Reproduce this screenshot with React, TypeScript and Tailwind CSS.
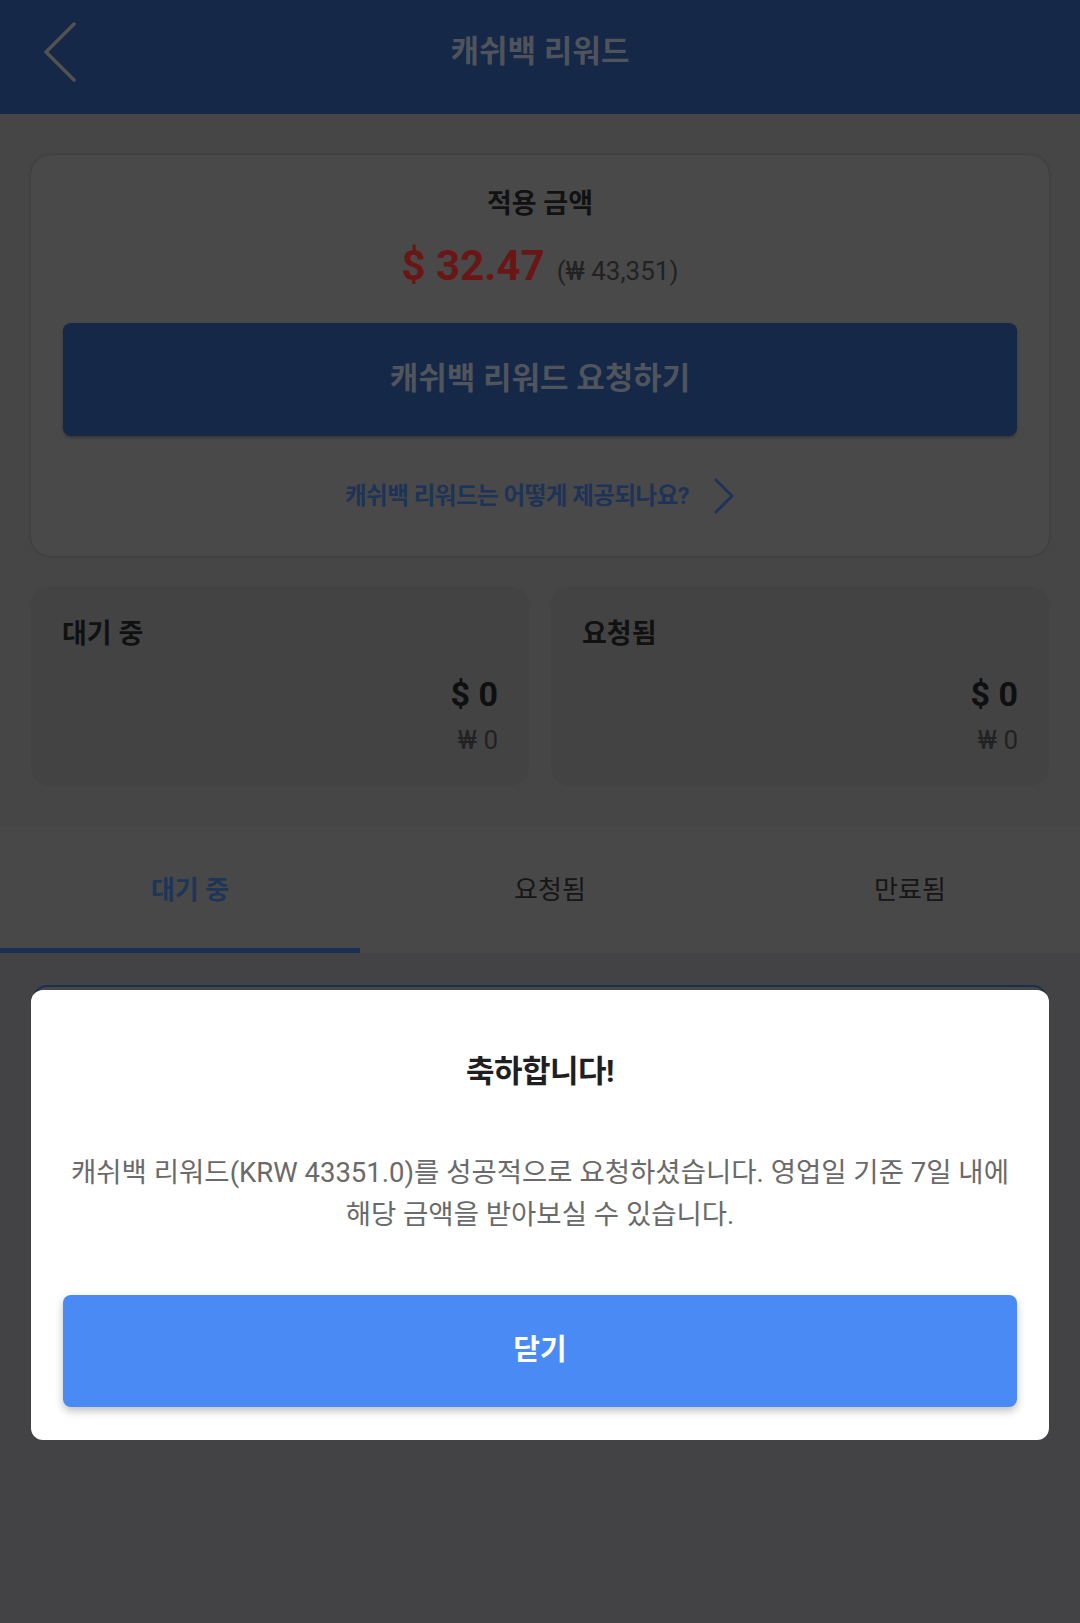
const tabs = ["대기 중", "요청됨", "만료됨"];

function SummaryCard({ label }: { label: string }) {
  return (
    <div className="flex-1 rounded-[20px] bg-[#434344] pl-[31px] pr-[31px] pt-[32px] pb-[32px]">
      <div className="text-[27px] leading-[32px] font-bold text-[#111111]">{label}</div>
      <div className="mt-[24px] text-right text-[34px] leading-[40px] font-bold text-[#0f0f0f]">$ 0</div>
      <div className="mt-[12px] text-right text-[26px] leading-[28px] text-[#222222]">₩ 0</div>
    </div>
  );
}

export default function App() {
  return (
    <div className="relative min-h-[1623px] w-[1080px] bg-[#434345] font-[Roboto,'Noto_Sans_CJK_KR',sans-serif]">
      {/* header */}
      <header className="relative flex h-[114px] items-center justify-center bg-[#152847] pb-[10px]">
        <svg
          className="absolute left-[43px] top-[22px]"
          width="34"
          height="60"
          viewBox="0 0 34 60"
          fill="none"
          stroke="#525252"
          strokeWidth="3.5"
          strokeLinecap="round"
          strokeLinejoin="round"
        >
          <path d="M31 2 L3 30 L31 58" />
        </svg>
        <h1 className="text-[31px] leading-[40px] font-bold text-[#4f535b]">캐쉬백 리워드</h1>
      </header>

      {/* 금액 영역 */}
      <section className="bg-[#464646] px-[31px] pt-[41px] pb-[40px]">
        <div className="rounded-[20px] bg-[#494949] px-[32px] pt-[31px] pb-[42px] shadow-[0_0_3px_rgba(0,0,0,0.25)]">
          <div className="text-center text-[27px] leading-[36px] font-bold text-[#121212]">적용 금액</div>
          <div className="mt-[20px] flex items-baseline justify-center leading-[48px]">
            <span className="text-[42px] font-bold text-[#6a1616]">$ 32.47</span>
            <span className="ml-[12px] text-[26px] text-[#222222]">(₩ 43,351)</span>
          </div>
          <button className="mt-[28px] flex h-[113px] w-full items-center justify-center rounded-[8px] bg-[#152847] text-[31px] font-bold text-[#50545c] shadow-[0_2px_3px_rgba(0,0,0,0.25)]">
            캐쉬백 리워드 요청하기
          </button>
          <div className="mt-[42px] flex h-[36px] items-center justify-center">
            <span className="text-[23.5px] leading-[32px] font-bold tracking-[-0.5px] text-[#1d3357]">
              캐쉬백 리워드는 어떻게 제공되나요?
            </span>
            <svg
              className="ml-[24px]"
              width="22"
              height="36"
              viewBox="0 0 22 36"
              fill="none"
              stroke="#1d3357"
              strokeWidth="3"
              strokeLinecap="round"
              strokeLinejoin="round"
            >
              <path d="M3 2 L19 18 L3 34" />
            </svg>
          </div>
        </div>

        <div className="mt-[30px] flex gap-[22px]">
          <SummaryCard label="대기 중" />
          <SummaryCard label="요청됨" />
        </div>
      </section>

      {/* 탭 */}
      <nav className="grid h-[127px] grid-cols-3 bg-[#484848]">
        {tabs.map((t, i) => (
          <div key={t} className="relative flex items-center justify-center pl-[20px]">
            <span
              className={
                i === 0
                  ? "text-[26px] leading-[32px] font-bold text-[#1f3558]"
                  : "text-[26px] leading-[32px] text-[#161616]"
              }
            >
              {t}
            </span>
            {i === 0 && <div className="absolute bottom-0 left-0 h-[5px] w-full bg-[#1b2f52]" />}
          </div>
        ))}
      </nav>

      {/* 목록 */}
      <div className="px-[33px] pt-[32px]">
        <div className="h-[320px] rounded-[14px] border-2 border-[#1b2f52] bg-[#474747]" />
      </div>

      {/* 모달 */}
      <div className="absolute left-[31px] right-[31px] top-[990px] rounded-[12px] bg-white px-[32px] pt-[62px] pb-[33px]">
        <div className="text-center text-[31px] leading-[40px] font-bold tracking-[-0.5px] text-[#1f1f1f]">축하합니다!</div>
        <p className="mt-[60px] text-center text-[27.5px] leading-[42px] text-[#6a6a6a]">
          캐쉬백 리워드(KRW 43351.0)를 성공적으로 요청하셨습니다. 영업일 기준 7일 내에 해당 금액을 받아보실 수 있습니다.
        </p>
        <button className="mt-[59px] flex h-[112px] w-full items-center justify-center rounded-[8px] bg-[#4a8af4] text-[29px] font-bold text-white shadow-[0_4px_8px_rgba(0,0,0,0.25)]">
          닫기
        </button>
      </div>
    </div>
  );
}
